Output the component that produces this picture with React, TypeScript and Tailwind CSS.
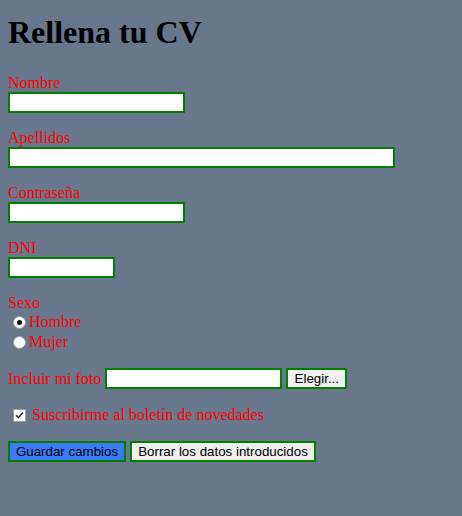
import React from 'react';

const serif = "font-['Liberation_Serif','Times_New_Roman',serif]";
const sans = "font-['Liberation_Sans',Arial,sans-serif]";

function Field({ label, width }: { label: string; width: string }) {
  return (
    <div className="flex flex-col mb-4">
      <label className="h-[18px] leading-[18px] text-[16px] text-[#ff0000]">{label}</label>
      <input
        type="text"
        className={`h-[21px] ${width} bg-white border-2 border-[#008000] outline-none`}
      />
    </div>
  );
}

function Radio({ label, checked }: { label: string; checked?: boolean }) {
  return (
    <div className="flex items-center h-5">
      <span className="ml-[5px] mr-[3px] w-[13px] h-[13px] rounded-full bg-white border border-[#9a9a9a] flex items-center justify-center">
        {checked && <span className="w-[5px] h-[5px] rounded-full bg-black" />}
      </span>
      <span className="text-[16px] leading-[18px] text-[#ff0000]">{label}</span>
    </div>
  );
}

export default function App() {
  return (
    <div className={`min-h-[516px] bg-[#69778d] px-2 pt-[14px] pb-8 ${serif}`}>
      <h1 className="text-[32px] font-bold leading-[37px] text-black mb-[23px]">Rellena tu CV</h1>

      <Field label="Nombre" width="w-[177px]" />
      <Field label="Apellidos" width="w-[387px]" />
      <Field label="Contraseña" width="w-[177px]" />
      <Field label="DNI" width="w-[107px]" />

      <div className="flex flex-col mb-4">
        <span className="h-[18px] leading-[18px] text-[16px] text-[#ff0000]">Sexo</span>
        <Radio label="Hombre" checked />
        <Radio label="Mujer" />
      </div>

      <div className="flex items-center h-[21px] mb-4">
        <span className="text-[16px] leading-[18px] text-[#ff0000] mr-1">Incluir mi foto</span>
        <input type="text" className="h-[21px] w-[177px] bg-white border-2 border-[#008000] outline-none" />
        <button
          className={`ml-1 h-[21px] w-[61px] bg-[#efefef] border-2 border-[#008000] text-[13.33px] leading-[15px] text-black ${sans}`}
        >
          Elegir...
        </button>
      </div>

      <div className="flex items-center h-5 mb-4">
        <span className="ml-[5px] w-[13px] h-[13px] bg-white border border-[#a0a0a0] flex items-center justify-center">
          <svg width="9" height="8" viewBox="0 0 9 8" fill="none">
            <path d="M1 4.2 L3.4 6.5 L8 1.5" stroke="#222" strokeWidth="1.4" />
          </svg>
        </span>
        <span className="ml-[6px] text-[16px] leading-[18px] text-[#ff0000]">
          Suscribirme al boletín de novedades
        </span>
      </div>

      <div className={`flex gap-1 ${sans}`}>
        <button className="h-[21px] w-[118px] bg-[#3a7bf5] border-2 border-[#008000] text-[13.33px] leading-[15px] text-black">
          Guardar cambios
        </button>
        <button className="h-[21px] w-[186px] bg-[#efefef] border-2 border-[#008000] text-[13.33px] leading-[15px] text-black">
          Borrar los datos introducidos
        </button>
      </div>
    </div>
  );
}
